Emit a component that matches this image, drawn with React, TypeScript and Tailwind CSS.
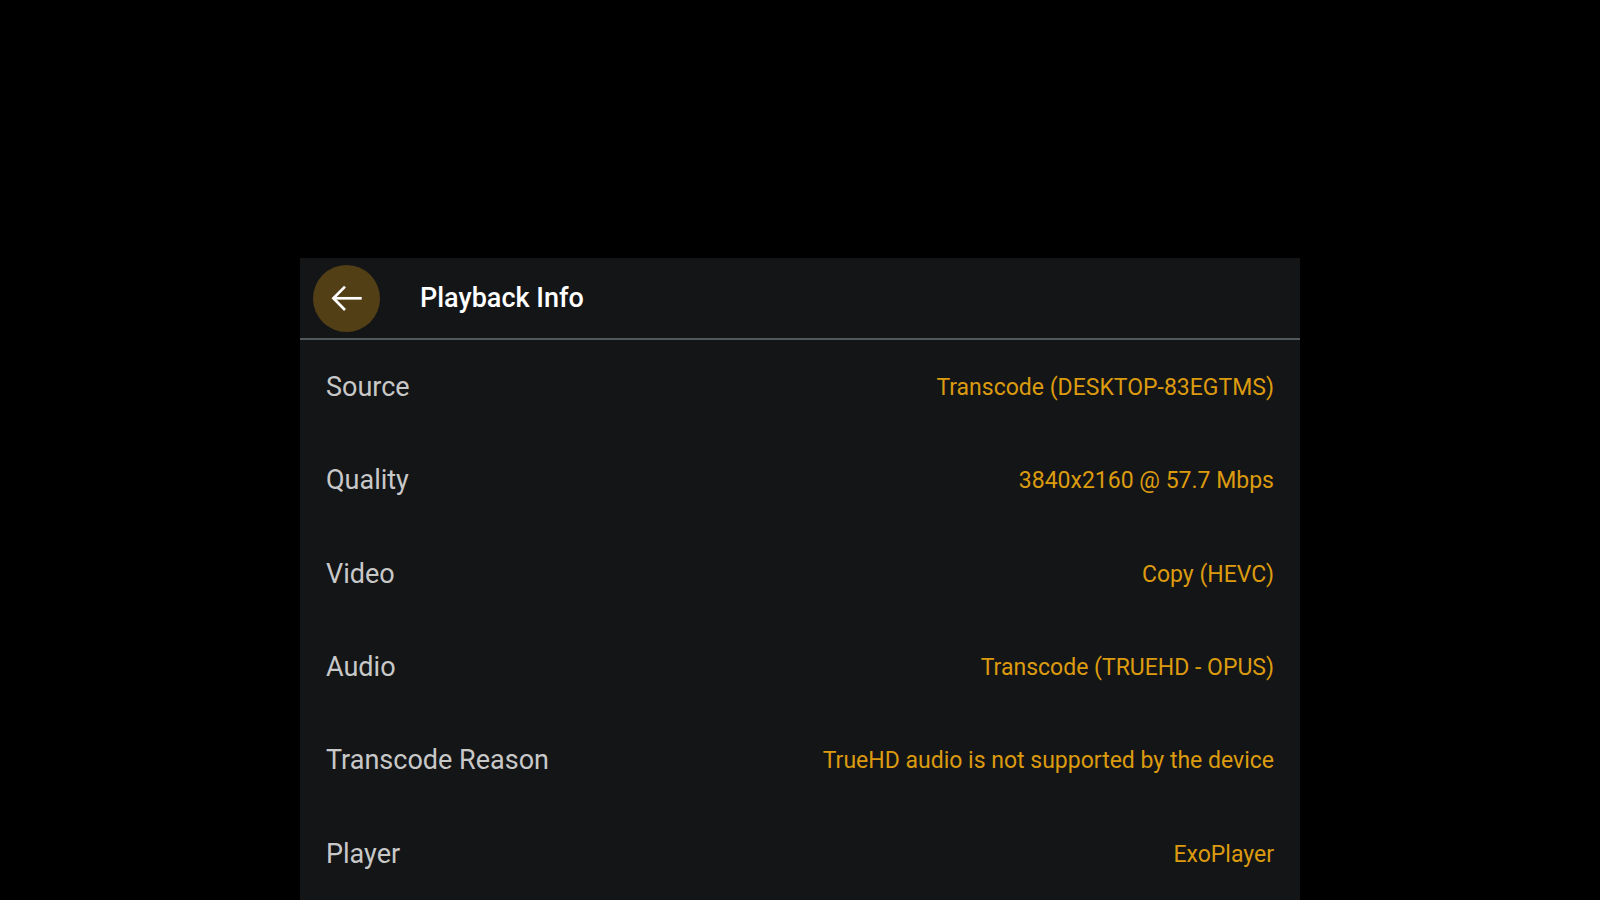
const details = [
  { label: "Source", value: "Transcode (DESKTOP-83EGTMS)" },
  { label: "Quality", value: "3840x2160 @ 57.7 Mbps" },
  { label: "Video", value: "Copy (HEVC)" },
  { label: "Audio", value: "Transcode (TRUEHD - OPUS)" },
  { label: "Transcode Reason", value: "TrueHD audio is not supported by the device" },
  { label: "Player", value: "ExoPlayer" },
];

function BackButton() {
  return (
    <button
      type="button"
      aria-label="Back"
      className="flex size-[67px] shrink-0 items-center justify-center rounded-full bg-[#533f16] text-white"
    >
      <svg viewBox="0 0 32 32" className="size-8" fill="none" stroke="currentColor" strokeWidth="2.7">
        <path d="M30.7 16.3H2.4" />
        <path d="M14 4.6 2.4 16.3 14 28" />
      </svg>
    </button>
  );
}

export default function App() {
  return (
    <div className="flex min-h-screen flex-col items-center bg-black pt-[258px] font-['Roboto',sans-serif]">
      <main className="flex w-5/8 flex-1 flex-col bg-[#141517]">
        <header className="flex h-[82px] items-center gap-10 border-b-2 border-[#4f585c] px-[13px]">
          <BackButton />
          <h1 className="text-[27px] leading-[35px] font-medium text-white">Playback Info</h1>
        </header>

        <dl className="grid flex-1 auto-rows-fr">
          {details.map(({ label, value }) => (
            <div key={label} className="flex items-center justify-between gap-6 px-[26px] pt-0.5">
              <dt className="text-[27px] leading-[35px] text-[#c8c8c8]">{label}</dt>
              <dd className="text-right text-[23px] leading-[35px] text-[#dc9b0f]">{value}</dd>
            </div>
          ))}
        </dl>
      </main>
    </div>
  );
}
